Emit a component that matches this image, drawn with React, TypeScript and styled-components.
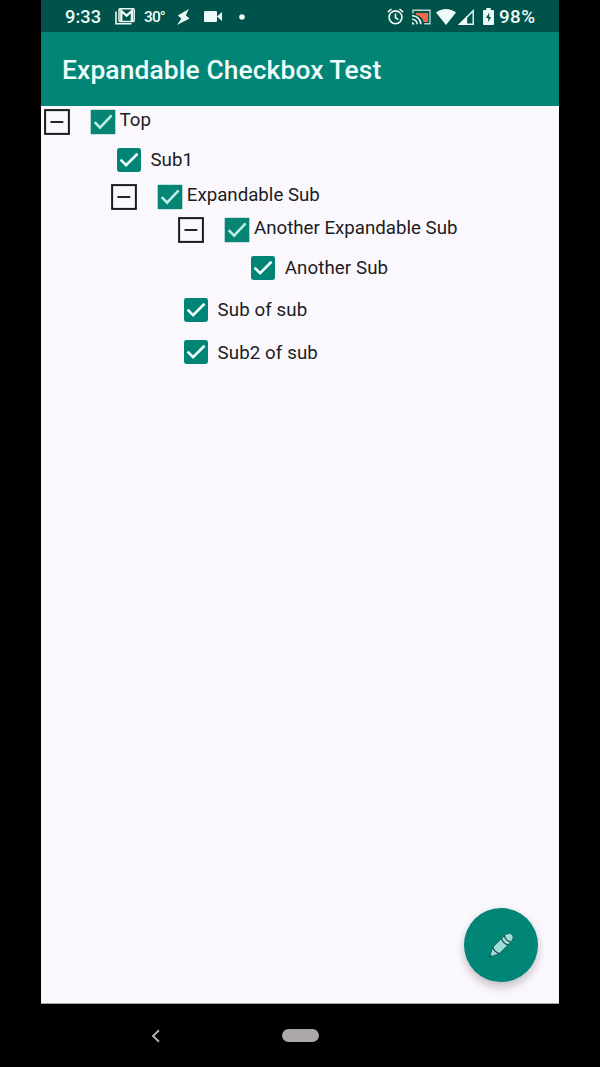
import React from "react";
import styled, { createGlobalStyle } from "styled-components";

const GlobalStyle = createGlobalStyle`
  * { box-sizing: border-box; }
  body { margin: 0; background: #000; font-family: Roboto, "Liberation Sans", sans-serif; }
`;

const Screen = styled.div`
  width: 518px;
  height: 1067px;
  margin-left: 41px;
  display: flex;
  flex-direction: column;
  background: #000;
`;

const StatusBar = styled.header`
  height: 32px;
  flex: none;
  display: flex;
  align-items: center;
  justify-content: space-between;
  padding: 1px 23px 0 24px;
  background: #00534a;
  color: #eefaf8;
`;

const StatusGroup = styled.div`
  display: flex;
  align-items: center;
`;

const Clock = styled.span`
  width: 36px;
  font-size: 18.2px;
  font-weight: 500;
  letter-spacing: 0.1px;
  line-height: 22px;
  white-space: nowrap;
`;

const Temperature = styled.span`
  width: 20px;
  margin-left: 9px;
  font-size: 15.5px;
  font-weight: 500;
  letter-spacing: -0.9px;
  line-height: 22px;
  white-space: nowrap;
`;

const Percent = styled.span`
  width: 37px;
  margin-left: 5px;
  font-size: 18.8px;
  font-weight: 500;
  letter-spacing: 0.4px;
  line-height: 22px;
  white-space: nowrap;
`;

const StatusIcon = styled.svg<{ $gap?: number }>`
  display: block;
  flex: none;
  overflow: visible;
  margin-left: ${(p) => p.$gap ?? 0}px;
`;

const AppBar = styled.div`
  height: 74px;
  flex: none;
  display: flex;
  align-items: center;
  padding: 1px 21px 0;
  background: #008577;
`;

const Title = styled.h1`
  margin: 0;
  color: #eefdfb;
  font-size: 26.4px;
  font-weight: 500;
  letter-spacing: 0.1px;
  line-height: 32px;
  white-space: nowrap;
`;

const Content = styled.main`
  position: relative;
  height: 898px;
  flex: none;
  background: #faf8fc;
  border-bottom: 1px solid #a5a3a6;
`;

const Branch = styled.div<{ $nested: boolean }>`
  padding-left: ${(p) => (p.$nested ? 67.2 : 0)}px;
`;

const BranchHeader = styled.div`
  height: 32.8px;
  display: flex;
  align-items: flex-start;
  padding: 3px 0 0 3px;
`;

const LeafRow = styled.div`
  height: 42.2px;
  display: flex;
  align-items: center;
  padding-left: 76px;
`;

const Label = styled.span<{ $leaf?: boolean }>`
  margin-left: ${(p) => (p.$leaf ? 9.4 : 3.6)}px;
  margin-top: ${(p) => (p.$leaf ? 1 : 0)}px;
  color: #1d1c1f;
  font-size: 18.7px;
  letter-spacing: ${(p) => (p.$leaf ? 0.1 : 0)}px;
  line-height: 22px;
  white-space: nowrap;
`;

const Toggle = styled.svg`
  display: block;
  flex: none;
  margin-right: 20px;
`;

const Check = styled.svg`
  display: block;
  flex: none;
`;

const Fab = styled.button`
  position: absolute;
  right: 21px;
  bottom: 21px;
  width: 74px;
  height: 74px;
  padding: 0;
  border: 0;
  border-radius: 50%;
  display: grid;
  place-items: center;
  background: #008577;
  box-shadow: 0 6px 9px rgba(40, 10, 30, 0.18), 0 1px 9px rgba(40, 10, 30, 0.08);
`;

const NavBar = styled.nav`
  height: 63px;
  flex: none;
  display: flex;
  align-items: center;
  padding-left: 109px;
`;

const HomePill = styled.div`
  width: 37px;
  height: 13px;
  margin-left: 121px;
  border-radius: 7px;
  background: #aba7ab;
`;

type TreeNode = { label: string; children?: TreeNode[] };

const tree: TreeNode = {
  label: "Top",
  children: [
    { label: "Sub1" },
    {
      label: "Expandable Sub",
      children: [
        { label: "Another Expandable Sub", children: [{ label: "Another Sub" }] },
        { label: "Sub of sub" },
        { label: "Sub2 of sub" },
      ],
    },
  ],
};

const CollapseIcon = () => (
  <Toggle width="26" height="26" viewBox="0 0 26 26">
    <rect x="1.1" y="1.1" width="23.8" height="23.8" fill="#faf8fc" stroke="#1c191d" strokeWidth="2" />
    <path d="M6.5 13h12.8" stroke="#1c191d" strokeWidth="1.9" />
  </Toggle>
);

const BranchCheck = () => (
  <Check width="26" height="26" viewBox="0 0 26 26">
    <rect x="0.7" y="0.8" width="24.6" height="24.4" fill="#068474" />
    <path d="M4.7 13.1l5.4 5.5L21.6 6.4" fill="none" stroke="#bdeee5" strokeWidth="2.6" />
  </Check>
);

const LeafCheck = () => (
  <Check width="24" height="24" viewBox="0 0 24 24">
    <rect width="24" height="24" rx="2.4" fill="#008475" />
    <path d="M3.6 11.6l5.5 5.5L20.5 5.7" fill="none" stroke="#effffc" strokeWidth="2.7" />
  </Check>
);

const TreeItem = ({ node, nested = false }: { node: TreeNode; nested?: boolean }) =>
  node.children ? (
    <Branch $nested={nested}>
      <BranchHeader>
        <CollapseIcon />
        <BranchCheck />
        <Label>{node.label}</Label>
      </BranchHeader>
      {node.children.map((child) => (
        <TreeItem key={child.label} node={child} nested />
      ))}
    </Branch>
  ) : (
    <LeafRow>
      <LeafCheck />
      <Label $leaf>{node.label}</Label>
    </LeafRow>
  );

const MailIcon = () => (
  <StatusIcon $gap={14} width="20" height="17" viewBox="0 0 20 17" fill="none" stroke="currentColor">
    <path d="M1 3.5v12.3h15.5" strokeWidth="1.6" />
    <rect x="4" y="0.8" width="15.2" height="12.6" rx="1" strokeWidth="1.5" />
    <path d="M6.3 13V3l5.3 4.7L16.9 3v10" strokeWidth="2.3" />
  </StatusIcon>
);

const BoltIcon = () => (
  <StatusIcon $gap={13} width="13" height="16" viewBox="0 0 13 16" fill="currentColor">
    <path d="M11.8 0L.8 6.4l3.6 3L0 16l12.6-6.6-3.8-3z" />
  </StatusIcon>
);

const VideoIcon = () => (
  <StatusIcon $gap={14} width="18" height="11" viewBox="0 0 18 11" fill="currentColor">
    <rect width="13" height="11" rx="1" />
    <path d="M13 5.5L18 1v9z" />
  </StatusIcon>
);

const DotIcon = () => (
  <StatusIcon $gap={17} width="6" height="6" viewBox="0 0 6 6" fill="currentColor">
    <circle cx="3" cy="3" r="2.8" />
  </StatusIcon>
);

const AlarmIcon = () => (
  <StatusIcon width="17" height="17" viewBox="0 0 17 17" fill="none" stroke="currentColor" strokeWidth="1.6">
    <circle cx="8.5" cy="9.3" r="6.4" />
    <path d="M8.5 5.5v4.3l2.9 1.8M.8 4.2L4.5 1M16.2 4.2L12.5 1" />
  </StatusIcon>
);

const CastIcon = () => (
  <StatusIcon $gap={8} width="19" height="16" viewBox="0 0 19 16" fill="none">
    <path d="M4 4h12v9h-4.4C11 9.4 8 6.5 4 5.7z" fill="#f4694b" />
    <path d="M1 4.6V1.2h17v13.6h-5.8" stroke="#b8d5d0" strokeWidth="1.4" />
    <path d="M0 6.8a8.4 8.4 0 018.8 8.4M0 10.3a5 5 0 015.2 4.9" stroke="currentColor" strokeWidth="1.5" />
    <path d="M0 13a2.6 2.6 0 012.5 2.4H0z" fill="currentColor" />
  </StatusIcon>
);

const WifiIcon = () => (
  <StatusIcon $gap={5} width="20" height="16" viewBox="0 0 20 16" fill="currentColor">
    <path d="M0 3.5C5.8-1.2 14.2-1.2 20 3.5L10 16z" />
  </StatusIcon>
);

const SignalIcon = () => (
  <StatusIcon $gap={2} width="16" height="16" viewBox="0 0 16 16">
    <path d="M1.8 15.2L15.2 1.7v13.5z" fill="none" stroke="currentColor" strokeWidth="1.4" />
    <path d="M0 16L9.2 6.8V16z" fill="currentColor" />
  </StatusIcon>
);

const BatteryIcon = () => (
  <StatusIcon $gap={9} width="11" height="17" viewBox="0 0 11 17">
    <path d="M3.3 0h4.4v2H10q1 0 1 1v13q0 1-1 1H1q-1 0-1-1V3q0-1 1-1h2.3z" fill="currentColor" />
    <path d="M6.2 4.6L3 10h2.2v4L8.2 9H6.2z" fill="#00534a" />
  </StatusIcon>
);

const PencilIcon = () => (
  <svg width="28" height="28" viewBox="0 0 28 28">
    <g stroke="#17574f" strokeWidth="0.8" strokeLinejoin="round">
      <path d="M2.4 26.2L5.8 16.2 18.8 3.4q3.8-2.3 6.4.2 2.2 3-.4 6.4L12.4 22.6z" fill="#9be0d6" />
      <path d="M5.8 16.2q1.4 5 6.6 6.4M14.6 7.6q1.4 4.8 6.4 6.4M17.4 4.8q1.4 4.8 6.3 6.3" fill="none" stroke="#17443f" strokeWidth="1.2" />
      <path d="M2.4 26.2l.9-2.4 1.4 1.3z" fill="#17443f" />
    </g>
  </svg>
);

export default function App() {
  return (
    <>
      <GlobalStyle />
      <Screen>
        <StatusBar>
          <StatusGroup>
            <Clock>9:33</Clock>
            <MailIcon />
            <Temperature>30°</Temperature>
            <BoltIcon />
            <VideoIcon />
            <DotIcon />
          </StatusGroup>
          <StatusGroup>
            <AlarmIcon />
            <CastIcon />
            <WifiIcon />
            <SignalIcon />
            <BatteryIcon />
            <Percent>98%</Percent>
          </StatusGroup>
        </StatusBar>
        <AppBar>
          <Title>Expandable Checkbox Test</Title>
        </AppBar>
        <Content>
          <TreeItem node={tree} />
          <Fab aria-label="Edit">
            <PencilIcon />
          </Fab>
        </Content>
        <NavBar>
          <svg width="11" height="14" viewBox="0 0 11 14">
            <path d="M9 1.2L3 7l6 5.8" fill="none" stroke="#b5b1b5" strokeWidth="1.9" />
          </svg>
          <HomePill />
        </NavBar>
      </Screen>
    </>
  );
}
